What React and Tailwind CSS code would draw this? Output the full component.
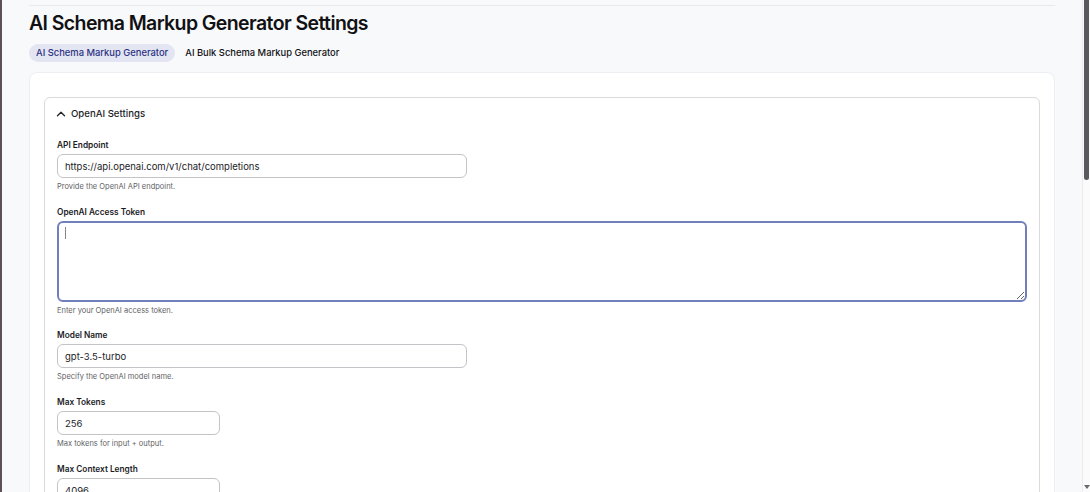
import React from "react";
import { ChevronUp } from "lucide-react";

const font = { fontFamily: "Inter, 'Noto Sans', sans-serif" };

const Field = ({ label, help, value, width = "w-[410px]" }) => (
  <div className="mb-[14px]">
    <label className="block text-[8.3px] leading-[12px] font-semibold text-[#1c1c1f] mb-[3px]">
      {label}
    </label>
    <input
      readOnly
      value={value}
      className={`block ${width} h-6 rounded-[6px] border border-[#c4c4c8] bg-white px-[7px] text-[9.5px] text-[#1c1c1f] outline-none`}
    />
    <p className="mt-[4px] text-[7.5px] leading-[10px] text-[#5f5f66]">{help}</p>
  </div>
);

export default function App() {
  return (
    <div
      className="flex h-[492px] w-[1090px] overflow-hidden border-l-2 border-[#5e5057] bg-[#f8f9fb]"
      style={font}
    >
      {/* main */}
      <div className="flex-1 px-[27px]">
        <div className="mt-[5px] h-px bg-[#e9eaee]" />
        <h1 className="mt-[3px] text-[19.5px] leading-[28px] font-semibold tracking-[-0.6px] text-[#111114]">
          AI Schema Markup Generator Settings
        </h1>

        {/* tabs */}
        <div className="mt-[7px] flex gap-[3px]">
          <div className="flex h-[18px] items-center rounded-full bg-[#e3e5f2] px-[7px] text-[9.4px] font-medium text-[#2d3282]">
            AI Schema Markup Generator
          </div>
          <div className="flex h-[18px] items-center rounded-full px-[7px] text-[9.4px] font-medium text-[#111114]">
            AI Bulk Schema Markup Generator
          </div>
        </div>

        {/* outer card */}
        <div className="mt-[10px] rounded-[8px] border border-[#eceef2] bg-white px-[14px] pt-[24px]">
          <div className="rounded-[6px] border border-[#dadadd] bg-white">
            <div className="flex h-[32px] items-center gap-[3px] px-[9px]">
              <ChevronUp size={14} strokeWidth={2.2} className="text-[#222]" />
              <span className="text-[9.6px] font-medium text-[#1c1c1f]">OpenAI Settings</span>
            </div>

            <div className="px-[12px] pt-[9px]">
              <Field
                label="API Endpoint"
                value="https://api.openai.com/v1/chat/completions"
                help="Provide the OpenAI API endpoint."
              />

              <div className="mb-[13px]">
                <label className="block text-[8.3px] leading-[12px] font-semibold text-[#1c1c1f] mb-[3px]">
                  OpenAI Access Token
                </label>
                <div className="relative">
                  <textarea
                    readOnly
                    className="block h-[81px] w-full rounded-[6px] border-2 border-[#7180bd] bg-white px-[7px] py-[5px] text-[9.5px] outline-none"
                  />
                  <span className="absolute left-[8px] top-[6px] h-[12px] w-px bg-[#888]" />
                </div>
                <p className="mt-[4px] text-[7.5px] leading-[10px] text-[#5f5f66]">
                  Enter your OpenAI access token.
                </p>
              </div>

              <Field label="Model Name" value="gpt-3.5-turbo" help="Specify the OpenAI model name." />
              <Field
                label="Max Tokens"
                value="256"
                width="w-[163px]"
                help="Max tokens for input + output."
              />
              <Field
                label="Max Context Length"
                value="4096"
                width="w-[163px]"
                help="Max context length."
              />
            </div>
          </div>
        </div>
      </div>

      {/* scrollbar */}
      <div className="flex w-[8px] flex-col border-l border-[#ececef] bg-[#fbfbfc]">
        <div className="mx-auto h-[180px] w-[5px] rounded-b-full bg-[#5a5a5e]" />
        <div className="flex-1" />
        <div className="mx-auto mb-[3px] h-0 w-0 border-x-[3px] border-t-[4px] border-x-transparent border-t-[#6a6a6e]" />
      </div>
    </div>
  );
}
